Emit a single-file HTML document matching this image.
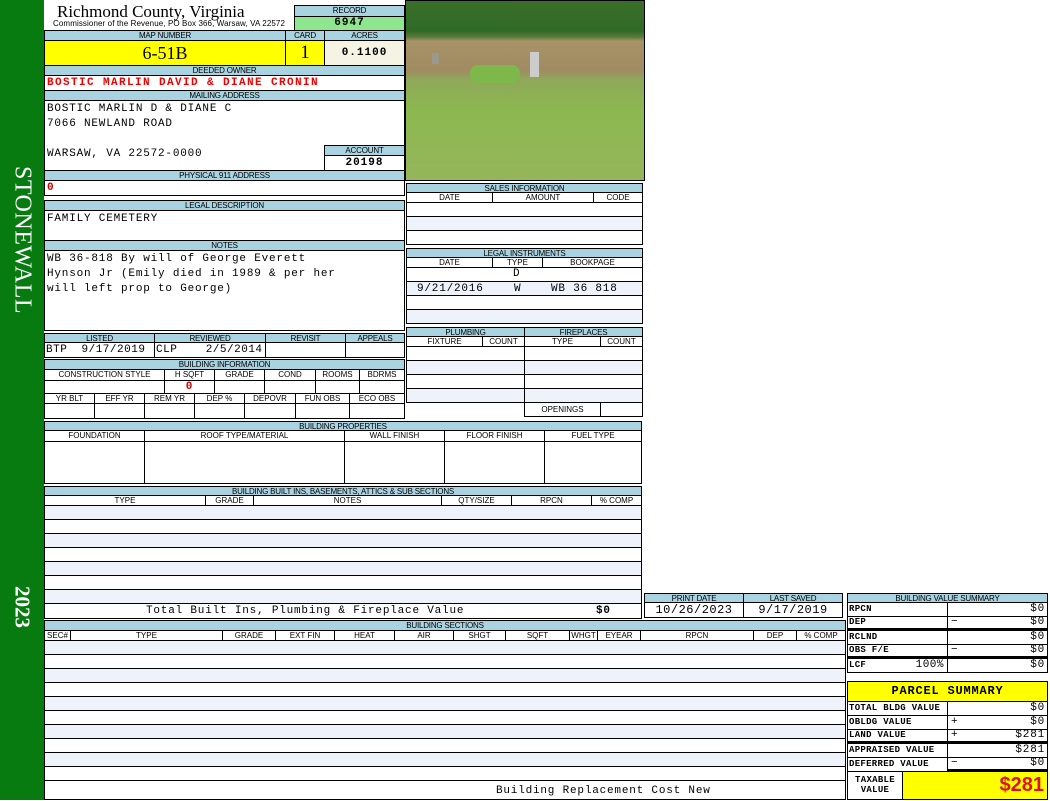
<!DOCTYPE html>
<html><head><meta charset="utf-8"><style>
*{margin:0;padding:0;box-sizing:border-box}
body{width:1050px;height:800px;position:relative;background:#fff;overflow:hidden;font-family:"Liberation Sans",sans-serif}
.a{position:absolute}
.c{position:absolute;border:1px solid #000;background:#fff}
.h{position:absolute;border:1px solid #000;background:#a9d3e0;font-size:8px;line-height:9px;text-align:center;color:#000;letter-spacing:-0.2px;white-space:nowrap;overflow:hidden}
.s{position:absolute;border:1px solid #000;background:#fff;font-size:8px;line-height:9px;text-align:center;white-space:nowrap;overflow:hidden}
.m{font-family:"Liberation Mono",monospace;font-size:11px;letter-spacing:0.8px}
.r{position:absolute;border:1px solid #000;border-top:none;background:#fff}
.r.l{background:#eef2fa}
.lb{font:bold 9px 'Liberation Mono',monospace;letter-spacing:0.3px}
</style></head><body>
<!-- sidebar -->
<div class="a" style="left:0;top:0;width:44px;height:800px;background:#077a10"></div>
<div class="a" style="left:22px;top:240px;transform:translate(-50%,-50%) rotate(90deg);color:#fff;font-family:'Liberation Serif',serif;font-size:24px;letter-spacing:0.5px;white-space:nowrap">STONEWALL</div>
<div class="a" style="left:22px;top:607px;transform:translate(-50%,-50%) rotate(90deg);color:#fff;font-family:'Liberation Serif',serif;font-weight:bold;font-size:21px;white-space:nowrap">2023</div>

<!-- header -->
<div class="a" style="left:57px;top:2px;font-family:'Liberation Serif',serif;font-size:17px;line-height:20px">Richmond County, Virginia</div>
<div class="a" style="left:53px;top:20px;font-size:8px;line-height:8px;letter-spacing:0.1px">Commissioner of the Revenue, PO Box 366, Warsaw, VA 22572</div>
<div class="h" style="left:294px;top:5px;width:111px;height:12px;line-height:10px">RECORD</div>
<div class="c m" style="left:294px;top:16px;width:111px;height:15px;background:#8ee78e;text-align:center;font-weight:bold;line-height:13px;letter-spacing:1px">6947</div>
<div class="h" style="left:44px;top:30px;width:242px;height:11px;line-height:9px">MAP NUMBER</div>
<div class="h" style="left:285px;top:30px;width:40px;height:11px;line-height:9px">CARD</div>
<div class="h" style="left:324px;top:30px;width:81px;height:11px;line-height:9px">ACRES</div>
<div class="c" style="left:44px;top:40px;width:242px;height:26px;background:#ffff00;text-align:center;font-family:'Liberation Serif',serif;font-size:18px;line-height:24px">6-51B</div>
<div class="c" style="left:285px;top:40px;width:40px;height:26px;background:#ffff00;text-align:center;font-family:'Liberation Serif',serif;font-size:19px;line-height:24px">1</div>
<div class="c m" style="left:324px;top:40px;width:81px;height:26px;background:#f5f3e4;text-align:center;font-weight:bold;line-height:24px;letter-spacing:1px">0.1100</div>
<div class="h" style="left:44px;top:65px;width:361px;height:11px;line-height:9px">DEEDED OWNER</div>
<div class="c m" style="left:44px;top:75px;width:361px;height:16px;color:#e00;font-weight:bold;padding-left:2px;line-height:15px;letter-spacing:1.4px">BOSTIC MARLIN DAVID &amp; DIANE CRONIN</div>
<div class="h" style="left:44px;top:90px;width:361px;height:11px;line-height:9px">MAILING ADDRESS</div>
<div class="c m" style="left:44px;top:100px;width:361px;height:71px;padding:1px 2px;line-height:15px">BOSTIC MARLIN D &amp; DIANE C<br>7066 NEWLAND ROAD<br><br>WARSAW, VA 22572-0000</div>
<div class="h" style="left:324px;top:145px;width:81px;height:11px;line-height:9px">ACCOUNT</div>
<div class="c m" style="left:324px;top:155px;width:81px;height:16px;text-align:center;font-weight:bold;line-height:14px;letter-spacing:1px">20198</div>
<div class="h" style="left:44px;top:170px;width:361px;height:11px;line-height:9px">PHYSICAL 911 ADDRESS</div>
<div class="c m" style="left:44px;top:180px;width:361px;height:16px;color:#c00;font-weight:bold;padding-left:2px;line-height:15px">0</div>
<div class="h" style="left:44px;top:200px;width:361px;height:11px;line-height:9px">LEGAL DESCRIPTION</div>
<div class="c m" style="left:44px;top:210px;width:361px;height:31px;padding:1px 2px;line-height:15px">FAMILY CEMETERY</div>
<div class="h" style="left:44px;top:240px;width:361px;height:11px;line-height:9px">NOTES</div>
<div class="c m" style="left:44px;top:250px;width:361px;height:81px;padding:1px 2px;line-height:15px">WB 36-818 By will of George Everett<br>Hynson Jr (Emily died in 1989 &amp; per her<br>will left prop to George)</div>

<!-- photo -->
<div class="a" style="left:405px;top:0;width:240px;height:181px;border:1px solid #000;background:linear-gradient(180deg,#3a6e2a 0,#2f6a26 30px,#5a7a3a 36px,#a89268 40px,#a08c62 70px,#8fa85a 78px,#8cb850 110px,#95b65a 181px)"></div>
<div class="a" style="left:470px;top:65px;width:50px;height:18px;background:#7fb84a;border-radius:8px"></div>
<div class="a" style="left:530px;top:52px;width:9px;height:25px;background:#ccc"></div>
<div class="a" style="left:432px;top:53px;width:7px;height:11px;background:#9a9a8a"></div>

<!-- sales -->
<div class="h" style="left:406px;top:183px;width:237px;height:10px">SALES INFORMATION</div>
<div class="s" style="left:406px;top:192px;width:87px;height:11px">DATE</div>
<div class="s" style="left:492px;top:192px;width:102px;height:11px">AMOUNT</div>
<div class="s" style="left:593px;top:192px;width:50px;height:11px">CODE</div>
<div class="r" style="left:406px;top:203px;width:237px;height:14px"></div>
<div class="r l" style="left:406px;top:217px;width:237px;height:14px"></div>
<div class="r" style="left:406px;top:231px;width:237px;height:14px"></div>

<div class="h" style="left:406px;top:248px;width:237px;height:10px">LEGAL INSTRUMENTS</div>
<div class="s" style="left:406px;top:257px;width:87px;height:11px">DATE</div>
<div class="s" style="left:492px;top:257px;width:51px;height:11px">TYPE</div>
<div class="s" style="left:542px;top:257px;width:101px;height:11px">BOOKPAGE</div>
<div class="r m" style="left:406px;top:268px;width:237px;height:14px;line-height:13px"><span class="a" style="left:106px">D</span></div>
<div class="r l m" style="left:406px;top:282px;width:237px;height:14px;line-height:14px"><span class="a" style="left:10px">9/21/2016</span><span class="a" style="left:107px">W</span><span class="a" style="left:144px">WB 36 818</span></div>
<div class="r" style="left:406px;top:296px;width:237px;height:14px"></div>
<div class="r l" style="left:406px;top:310px;width:237px;height:14px"></div>

<div class="h" style="left:406px;top:327px;width:119px;height:10px">PLUMBING</div>
<div class="h" style="left:524px;top:327px;width:119px;height:10px">FIREPLACES</div>
<div class="s" style="left:406px;top:336px;width:77px;height:11px">FIXTURE</div>
<div class="s" style="left:482px;top:336px;width:43px;height:11px">COUNT</div>
<div class="s" style="left:524px;top:336px;width:77px;height:11px">TYPE</div>
<div class="s" style="left:600px;top:336px;width:43px;height:11px">COUNT</div>
<div class="r" style="left:406px;top:347px;width:119px;height:14px"></div>
<div class="r l" style="left:406px;top:361px;width:119px;height:14px"></div>
<div class="r" style="left:406px;top:375px;width:119px;height:14px"></div>
<div class="r l" style="left:406px;top:389px;width:119px;height:14px"></div>
<div class="r" style="left:524px;top:347px;width:119px;height:14px"></div>
<div class="r l" style="left:524px;top:361px;width:119px;height:14px"></div>
<div class="r" style="left:524px;top:375px;width:119px;height:14px"></div>
<div class="r l" style="left:524px;top:389px;width:119px;height:14px"></div>
<div class="r" style="left:524px;top:403px;width:77px;height:14px;font-size:8px;text-align:center;line-height:13px">OPENINGS</div>
<div class="r" style="left:600px;top:403px;width:43px;height:14px"></div>

<!-- listed -->
<div class="h" style="left:44px;top:333px;width:111px;height:10px">LISTED</div>
<div class="h" style="left:154px;top:333px;width:112px;height:10px">REVIEWED</div>
<div class="h" style="left:265px;top:333px;width:81px;height:10px">REVISIT</div>
<div class="h" style="left:345px;top:333px;width:60px;height:10px">APPEALS</div>
<div class="c m" style="left:44px;top:342px;width:111px;height:16px;line-height:14px;padding-left:1px;white-space:pre;letter-spacing:0.5px">BTP  9/17/2019</div>
<div class="c m" style="left:154px;top:342px;width:112px;height:16px;line-height:14px;padding-left:1px;white-space:pre;letter-spacing:0.5px">CLP    2/5/2014</div>
<div class="c" style="left:265px;top:342px;width:81px;height:16px"></div>
<div class="c" style="left:345px;top:342px;width:60px;height:16px"></div>

<div class="h" style="left:44px;top:359px;width:361px;height:11px;line-height:9px">BUILDING INFORMATION</div>
<div class="s" style="left:44px;top:369px;width:121px;height:12px;line-height:10px">CONSTRUCTION STYLE</div>
<div class="s" style="left:164px;top:369px;width:51px;height:12px;line-height:10px">H SQFT</div>
<div class="s" style="left:214px;top:369px;width:51px;height:12px;line-height:10px">GRADE</div>
<div class="s" style="left:264px;top:369px;width:52px;height:12px;line-height:10px">COND</div>
<div class="s" style="left:315px;top:369px;width:45px;height:12px;line-height:10px">ROOMS</div>
<div class="s" style="left:359px;top:369px;width:46px;height:12px;line-height:10px">BDRMS</div>
<div class="c" style="left:44px;top:380px;width:121px;height:14px"></div>
<div class="c m" style="left:164px;top:380px;width:51px;height:14px;color:#c00;font-weight:bold;text-align:center;line-height:13px">0</div>
<div class="c" style="left:214px;top:380px;width:51px;height:14px"></div>
<div class="c" style="left:264px;top:380px;width:52px;height:14px"></div>
<div class="c" style="left:315px;top:380px;width:45px;height:14px"></div>
<div class="c" style="left:359px;top:380px;width:46px;height:14px"></div>
<div class="s" style="left:44px;top:393px;width:51px;height:11px">YR BLT</div>
<div class="s" style="left:94px;top:393px;width:51px;height:11px">EFF YR</div>
<div class="s" style="left:144px;top:393px;width:51px;height:11px">REM YR</div>
<div class="s" style="left:194px;top:393px;width:51px;height:11px">DEP %</div>
<div class="s" style="left:244px;top:393px;width:52px;height:11px">DEPOVR</div>
<div class="s" style="left:295px;top:393px;width:55px;height:11px">FUN OBS</div>
<div class="s" style="left:349px;top:393px;width:56px;height:11px">ECO OBS</div>
<div class="c" style="left:44px;top:403px;width:51px;height:16px"></div>
<div class="c" style="left:94px;top:403px;width:51px;height:16px"></div>
<div class="c" style="left:144px;top:403px;width:51px;height:16px"></div>
<div class="c" style="left:194px;top:403px;width:51px;height:16px"></div>
<div class="c" style="left:244px;top:403px;width:52px;height:16px"></div>
<div class="c" style="left:295px;top:403px;width:55px;height:16px"></div>
<div class="c" style="left:349px;top:403px;width:56px;height:16px"></div>

<!-- building properties -->
<div class="h" style="left:44px;top:421px;width:598px;height:10px">BUILDING PROPERTIES</div>
<div class="s" style="left:44px;top:430px;width:101px;height:12px;line-height:10px">FOUNDATION</div>
<div class="s" style="left:144px;top:430px;width:201px;height:12px;line-height:10px">ROOF TYPE/MATERIAL</div>
<div class="s" style="left:344px;top:430px;width:101px;height:12px;line-height:10px">WALL FINISH</div>
<div class="s" style="left:444px;top:430px;width:101px;height:12px;line-height:10px">FLOOR FINISH</div>
<div class="s" style="left:544px;top:430px;width:98px;height:12px;line-height:10px">FUEL TYPE</div>
<div class="c" style="left:44px;top:441px;width:101px;height:43px"></div>
<div class="c" style="left:144px;top:441px;width:201px;height:43px"></div>
<div class="c" style="left:344px;top:441px;width:101px;height:43px"></div>
<div class="c" style="left:444px;top:441px;width:101px;height:43px"></div>
<div class="c" style="left:544px;top:441px;width:98px;height:43px"></div>

<!-- built ins -->
<div class="h" style="left:44px;top:486px;width:598px;height:10px">BUILDING BUILT INS, BASEMENTS, ATTICS &amp; SUB SECTIONS</div>
<div class="s" style="left:44px;top:495px;width:162px;height:11px">TYPE</div>
<div class="s" style="left:205px;top:495px;width:49px;height:11px">GRADE</div>
<div class="s" style="left:253px;top:495px;width:189px;height:11px">NOTES</div>
<div class="s" style="left:441px;top:495px;width:71px;height:11px">QTY/SIZE</div>
<div class="s" style="left:511px;top:495px;width:81px;height:11px">RPCN</div>
<div class="s" style="left:591px;top:495px;width:51px;height:11px">% COMP</div>
<div class="r l" style="left:44px;top:506px;width:598px;height:14px"></div>
<div class="r" style="left:44px;top:520px;width:598px;height:14px"></div>
<div class="r l" style="left:44px;top:534px;width:598px;height:14px"></div>
<div class="r" style="left:44px;top:548px;width:598px;height:14px"></div>
<div class="r l" style="left:44px;top:562px;width:598px;height:14px"></div>
<div class="r" style="left:44px;top:576px;width:598px;height:14px"></div>
<div class="r l" style="left:44px;top:590px;width:598px;height:14px"></div>
<div class="r m" style="left:44px;top:604px;width:598px;height:15px;line-height:14px"><span class="a" style="left:101px">Total Built Ins, Plumbing &amp; Fireplace Value</span><span class="a" style="left:551px;font-weight:bold">$0</span></div>

<!-- print date -->
<div class="h" style="left:644px;top:593px;width:100px;height:10px">PRINT DATE</div>
<div class="h" style="left:743px;top:593px;width:100px;height:10px">LAST SAVED</div>
<div class="c m" style="left:644px;top:602px;width:100px;height:16px;text-align:center;line-height:14px;font-size:12px;letter-spacing:0.5px">10/26/2023</div>
<div class="c m" style="left:743px;top:602px;width:100px;height:16px;text-align:center;line-height:14px;font-size:12px;letter-spacing:0.5px">9/17/2019</div>

<!-- building sections -->
<div class="h" style="left:44px;top:620px;width:802px;height:11px;line-height:9px">BUILDING SECTIONS</div>
<div class="s" style="left:44px;top:630px;width:27px;height:11px">SEC#</div>
<div class="s" style="left:70px;top:630px;width:153px;height:11px">TYPE</div>
<div class="s" style="left:222px;top:630px;width:54px;height:11px">GRADE</div>
<div class="s" style="left:275px;top:630px;width:60px;height:11px">EXT FIN</div>
<div class="s" style="left:334px;top:630px;width:61px;height:11px">HEAT</div>
<div class="s" style="left:394px;top:630px;width:60px;height:11px">AIR</div>
<div class="s" style="left:453px;top:630px;width:53px;height:11px">SHGT</div>
<div class="s" style="left:505px;top:630px;width:65px;height:11px">SQFT</div>
<div class="s" style="left:569px;top:630px;width:29px;height:11px">WHGT</div>
<div class="s" style="left:597px;top:630px;width:44px;height:11px">EYEAR</div>
<div class="s" style="left:640px;top:630px;width:114px;height:11px">RPCN</div>
<div class="s" style="left:753px;top:630px;width:44px;height:11px">DEP</div>
<div class="s" style="left:796px;top:630px;width:50px;height:11px">% COMP</div>
<div class="r l" style="left:44px;top:641px;width:802px;height:14px"></div>
<div class="r" style="left:44px;top:655px;width:802px;height:14px"></div>
<div class="r l" style="left:44px;top:669px;width:802px;height:14px"></div>
<div class="r" style="left:44px;top:683px;width:802px;height:14px"></div>
<div class="r l" style="left:44px;top:697px;width:802px;height:14px"></div>
<div class="r" style="left:44px;top:711px;width:802px;height:14px"></div>
<div class="r l" style="left:44px;top:725px;width:802px;height:14px"></div>
<div class="r" style="left:44px;top:739px;width:802px;height:14px"></div>
<div class="r l" style="left:44px;top:753px;width:802px;height:14px"></div>
<div class="r" style="left:44px;top:767px;width:802px;height:14px"></div>
<div class="r m" style="left:44px;top:781px;width:802px;height:19px;line-height:20px"><span class="a" style="left:451px">Building Replacement Cost New</span></div>

<!-- building value summary -->
<div class="h" style="left:847px;top:593px;width:201px;height:10px">BUILDING VALUE SUMMARY</div>
<div class="c lb" style="left:847px;top:602px;width:101px;height:15px;line-height:13px;padding-left:1px">RPCN</div>
<div class="c m" style="left:947px;top:602px;width:101px;height:15px;text-align:right;padding-right:2px;line-height:13px">$0</div>
<div class="c lb" style="left:847px;top:616px;width:101px;height:15px;line-height:11px;padding-left:1px;border-bottom:3px solid #000">DEP</div>
<div class="c m" style="left:947px;top:616px;width:101px;height:15px;text-align:right;padding-right:2px;line-height:11px;border-bottom:3px solid #000"><span style="float:left;padding-left:3px">−</span>$0</div>
<div class="c lb" style="left:847px;top:630px;width:101px;height:15px;line-height:13px;padding-left:1px">RCLND</div>
<div class="c m" style="left:947px;top:630px;width:101px;height:15px;text-align:right;padding-right:2px;line-height:13px">$0</div>
<div class="c lb" style="left:847px;top:644px;width:101px;height:15px;line-height:11px;padding-left:1px;border-bottom:3px solid #000">OBS F/E</div>
<div class="c m" style="left:947px;top:644px;width:101px;height:15px;text-align:right;padding-right:2px;line-height:11px;border-bottom:3px solid #000"><span style="float:left;padding-left:3px">−</span>$0</div>
<div class="c lb" style="left:847px;top:658px;width:101px;height:15px;line-height:13px;padding-left:1px">LCF<span style="position:absolute;right:3px;font:11px 'Liberation Mono',monospace;letter-spacing:0.5px">100%</span></div>
<div class="c m" style="left:947px;top:658px;width:101px;height:15px;text-align:right;padding-right:2px;line-height:13px">$0</div>

<!-- parcel summary -->
<div class="c" style="left:847px;top:681px;width:201px;height:21px;background:#ffff00;text-align:center;font:bold 12px 'Liberation Mono',monospace;line-height:19px;letter-spacing:0.8px">PARCEL SUMMARY</div>
<div class="c lb" style="left:847px;top:701px;width:101px;height:15px;line-height:13px;padding-left:1px">TOTAL BLDG VALUE</div>
<div class="c m" style="left:947px;top:701px;width:101px;height:15px;text-align:right;padding-right:2px;line-height:13px">$0</div>
<div class="c lb" style="left:847px;top:715px;width:101px;height:15px;line-height:13px;padding-left:1px">OBLDG VALUE</div>
<div class="c m" style="left:947px;top:715px;width:101px;height:15px;text-align:right;padding-right:2px;line-height:13px"><span style="float:left;padding-left:3px">+</span>$0</div>
<div class="c lb" style="left:847px;top:729px;width:101px;height:15px;line-height:11px;padding-left:1px;border-bottom:3px solid #000">LAND VALUE</div>
<div class="c m" style="left:947px;top:729px;width:101px;height:15px;text-align:right;padding-right:2px;line-height:11px;border-bottom:3px solid #000"><span style="float:left;padding-left:3px">+</span>$281</div>
<div class="c lb" style="left:847px;top:743px;width:101px;height:15px;line-height:13px;padding-left:1px">APPRAISED VALUE</div>
<div class="c m" style="left:947px;top:743px;width:101px;height:15px;text-align:right;padding-right:2px;line-height:13px">$281</div>
<div class="c lb" style="left:847px;top:757px;width:101px;height:15px;line-height:13px;padding-left:1px">DEFERRED VALUE</div>
<div class="c m" style="left:947px;top:757px;width:101px;height:15px;text-align:right;padding-right:2px;line-height:11px;border-bottom:3px solid #000"><span style="float:left;padding-left:3px">−</span>$0</div>
<div class="c lb" style="left:847px;top:771px;width:56px;height:29px;line-height:10px;text-align:center;padding-top:3px">TAXABLE<br>VALUE</div>
<div class="c" style="left:902px;top:771px;width:146px;height:29px;background:#ffff00;text-align:right;padding-right:3px;color:#e01010;font:bold 20px 'Liberation Sans',sans-serif;line-height:27px">$281</div>
</body></html>
